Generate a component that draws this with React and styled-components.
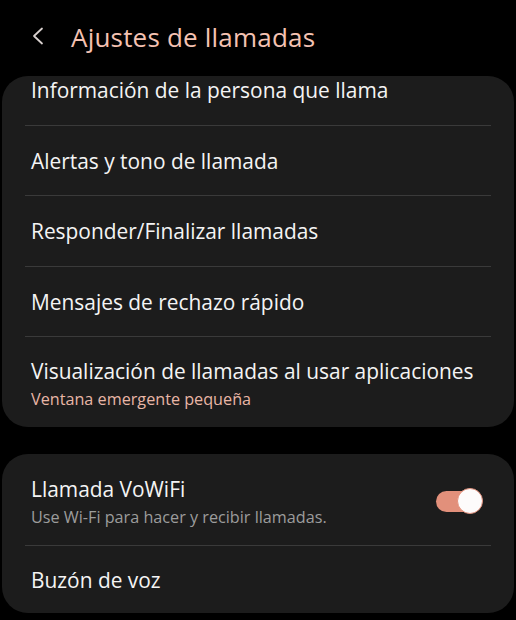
import React from "react";
import styled, { createGlobalStyle } from "styled-components";

const GlobalStyle = createGlobalStyle`
  html, body {
    margin: 0;
    padding: 0;
    background: #000;
  }
  body {
    font-family: "Open Sans", "Noto Sans", sans-serif;
    color: #f2f2f2;
  }
`;

const Screen = styled.div`
  width: 516px;
  height: 620px;
  overflow: hidden;
  background: #000;
  display: flex;
  flex-direction: column;
`;

const Header = styled.div`
  height: 76px;
  display: flex;
  align-items: center;
  padding-left: 31px;
  gap: 22px;
  box-sizing: border-box;
`;

const BackButton = styled.div`
  width: 18px;
  height: 20px;
  display: flex;
  align-items: center;
  margin-top: -4px;
`;

const Title = styled.div`
  font-size: 26px;
  color: #f4c2b2;
  letter-spacing: 0.2px;
  margin-top: -3px;
`;

const Card = styled.div`
  margin: 0 2px;
  background: #1c1c1c;
  border-radius: 26px;
  overflow: hidden;
  margin-bottom: ${(p) => p.$gap || 0}px;
`;

const Row = styled.div`
  display: flex;
  align-items: center;
  justify-content: space-between;
  height: ${(p) => p.$h || 69}px;
  padding: ${(p) => p.$pt || 0}px 32px ${(p) => p.$pb || 0}px 29px;
  box-sizing: border-box;
`;

const Divider = styled.div`
  height: 1px;
  margin: 0 23px;
  background: #3a3a3a;
`;

const TextCol = styled.div`
  display: flex;
  flex-direction: column;
  gap: 3px;
`;

const Label = styled.div`
  font-size: 20.9px;
  line-height: 28px;
  color: #f4f4f4;
  white-space: nowrap;
`;

const Sub = styled.div`
  font-size: 16.2px;
  line-height: 22px;
  color: ${(p) => (p.$accent ? "#e9b6a6" : "#9c9c9c")};
  white-space: nowrap;
`;

const Toggle = styled.div`
  width: 46px;
  height: 21px;
  border-radius: 11px;
  background: #e2907b;
  position: relative;
`;

const Thumb = styled.div`
  position: absolute;
  right: -1px;
  top: 50%;
  transform: translateY(-50%);
  width: 24px;
  height: 24px;
  border-radius: 50%;
  background: #fdfbfb;
  border: 1.5px solid #e2907b;
`;

export default function App() {
  return (
    <Screen>
      <GlobalStyle />
      <Header>
        <BackButton>
          <svg width="14" height="18" viewBox="0 0 14 18" fill="none">
            <path d="M11 1.5 L3 9 L11 16.5" stroke="#d8d0ce" strokeWidth="1.8" strokeLinecap="round" strokeLinejoin="round" />
          </svg>
        </BackButton>
        <Title>Ajustes de llamadas</Title>
      </Header>

      <Card $gap={27}>
        <Row $h={49} $pb={21}>
          <Label>Información de la persona que llama</Label>
        </Row>
        <Divider />
        <Row>
          <Label>Alertas y tono de llamada</Label>
        </Row>
        <Divider />
        <Row $h={70}>
          <Label>Responder/Finalizar llamadas</Label>
        </Row>
        <Divider />
        <Row>
          <Label>Mensajes de rechazo rápido</Label>
        </Row>
        <Divider />
        <Row $h={90} $pt={2}>
          <TextCol>
            <Label>Visualización de llamadas al usar aplicaciones</Label>
            <Sub $accent>Ventana emergente pequeña</Sub>
          </TextCol>
        </Row>
      </Card>

      <Card>
        <Row $h={91} $pt={3}>
          <TextCol>
            <Label>Llamada VoWiFi</Label>
            <Sub>Use Wi-Fi para hacer y recibir llamadas.</Sub>
          </TextCol>
          <Toggle>
            <Thumb />
          </Toggle>
        </Row>
        <Divider />
        <Row $h={67}>
          <Label>Buzón de voz</Label>
        </Row>
      </Card>
    </Screen>
  );
}
